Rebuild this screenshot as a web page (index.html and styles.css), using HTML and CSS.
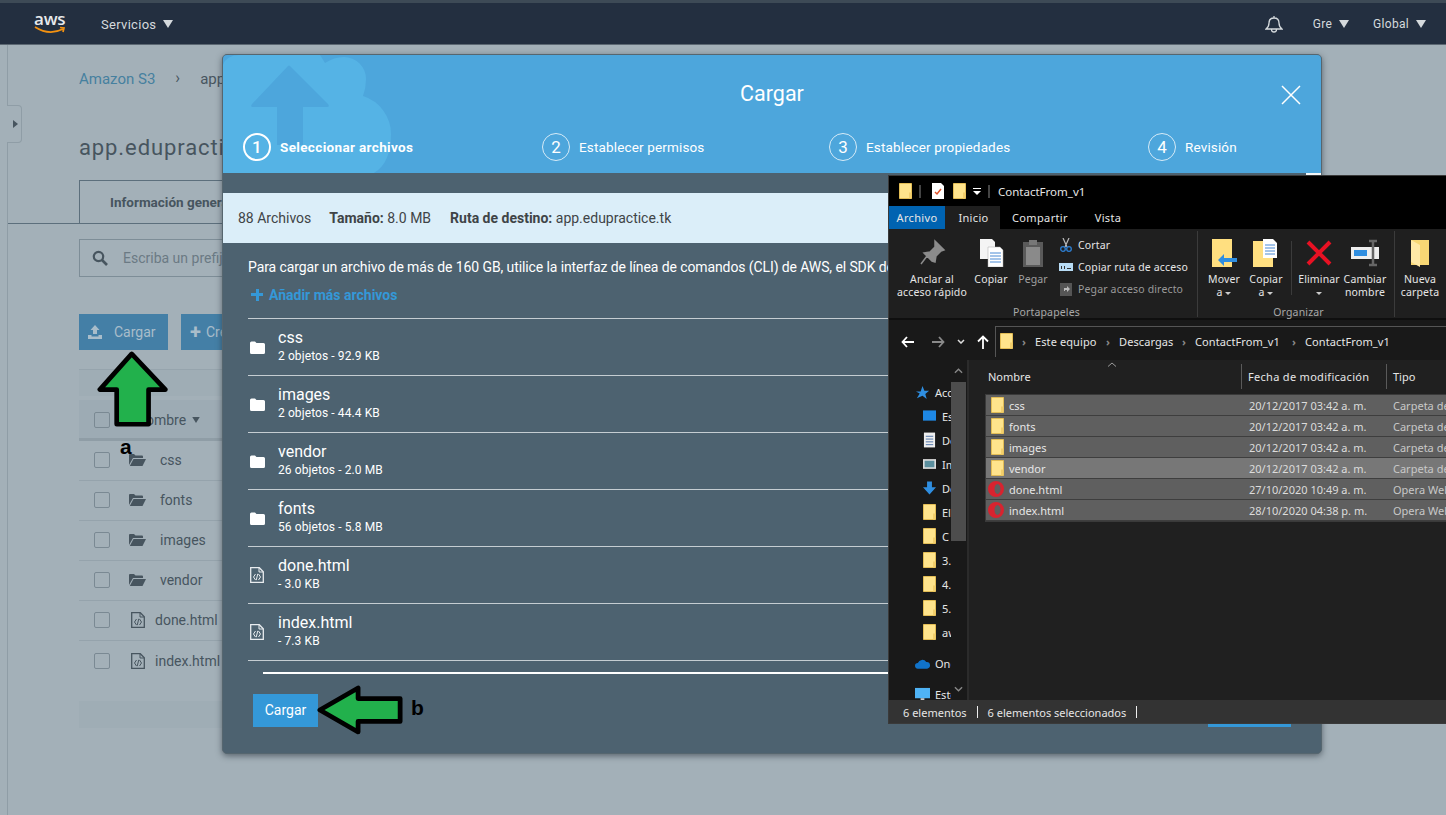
FILE: index.html
```html
<!DOCTYPE html>
<html lang="en">
<head>
  <meta charset="UTF-8" />
  <title>Cargar – Amazon S3</title>
  <link rel="stylesheet" href="styles.css">
</head>
<body>
  <svg class="defs" width="0" height="0">
    <symbol id="i-folder" viewBox="0 0 13 16">
      <path d="M.5.5h12v15H.5z" fill="#ffe48c" stroke="#e3bd55"/>
      <path d="M10 9.500h2.500v6H10z" fill="#f3cf6c"/>
    </symbol>
    <symbol id="i-caret" viewBox="0 0 10 8"><path d="M0 0h10L5 8z" fill="currentColor"/></symbol>
    <symbol id="i-openfolder" viewBox="0 0 17 14">
      <path d="M0 12V2q0-1 1-1h4l1.500 1.500H13q1 0 1 1V5H4L0 12z" fill="currentColor"/>
      <path d="M4.500 6H17l-3.500 7H.8z" fill="currentColor"/>
    </symbol>
    <symbol id="i-file" viewBox="0 0 14 16">
      <path d="M.7.700h8.600l4 4v10.600H.7z" fill="none" stroke="currentColor" stroke-width="1.300"/>
      <path d="M9 1v4h4M5.500 7 3.500 10l2 3M8.500 7l2 3-2 3M7.800 6.800 6.200 13.200" fill="none" stroke="currentColor"/>
    </symbol>
    <symbol id="i-whitefolder" viewBox="0 0 15 13">
      <path d="M0 2q0-1.500 1.500-1.500h3.500L6.500 2h7Q15 2 15 3.500v8q0 1.500-1.500 1.500h-12Q0 13 0 11.500z" fill="#fff"/>
    </symbol>
    <symbol id="i-opera" viewBox="0 0 16 16">
      <path fill-rule="evenodd" d="M8 0a8 8 0 1 0 0 16A8 8 0 0 0 8 0zm1.500 3c1.800 0 3 2.200 3 5s-1.200 5-3 5-3-2.200-3-5 1.200-5 3-5z" fill="#d8232f"/>
    </symbol>
  </svg>

  <header class="topnav">
    <div class="logo">
      <span class="logo-text">aws</span>
      <svg class="logo-smile" viewBox="0 0 33 8"><path d="M1 1q14 9 28 2M26 1.500l4 .5-1 4" fill="none" stroke="#f29111" stroke-width="1.700"/></svg>
    </div>
    <span class="nav-item nav-services">Servicios <svg class="nav-caret"><use href="#i-caret"/></svg></span>
    <svg class="bell" viewBox="0 0 18 18"><path d="M1 14q3-2 3-6 0-5 5-5t5 5q0 4 3 6zM9 1v2M6.500 14.500a2.500 2.500 0 0 0 5 0" fill="none" stroke="#d5dadd" stroke-width="1.300"/></svg>
    <span class="nav-item nav-user">Gre <svg class="nav-caret"><use href="#i-caret"/></svg></span>
    <span class="nav-item">Global <svg class="nav-caret"><use href="#i-caret"/></svg></span>
  </header>

  <div class="console">
    <div class="side-handle"><span class="side-arrow"></span></div>
    <main class="bucket">
      <nav class="crumbs"><a>Amazon S3</a><span class="crumb-sep">›</span><span>app.edupractice.tk</span></nav>
      <h1 class="bucket-title">app.edupractice.tk</h1>
      <div class="tabs"><div class="tab">Información general</div></div>
      <div class="search">
        <svg class="search-icon" viewBox="0 0 16 16"><circle cx="6.500" cy="6.500" r="4.700" fill="none" stroke="currentColor" stroke-width="2.200"/><path d="m10 10 5 5" stroke="currentColor" stroke-width="2.600"/></svg>
        <span>Escriba un prefijo</span>
      </div>
      <div class="actions">
        <button class="action action-upload">
          <svg class="action-icon" viewBox="0 0 16 14"><path d="M8 0l4.500 5H10v4H6V5H3.500zM1 10h3.500v1.500h7V10H15v4H1z" fill="currentColor"/></svg>
          Cargar
        </button>
        <button class="action action-new"><span class="plus">+</span> Crear carpeta</button>
      </div>
      <div class="table-band"></div>
      <div class="row row-head"><span class="check"></span><span class="col-name">Nombre <svg class="sort-caret"><use href="#i-caret"/></svg></span></div>
      <div class="row"><span class="check"></span><svg class="row-folder"><use href="#i-openfolder"/></svg><span class="row-name">css</span></div>
      <div class="row"><span class="check"></span><svg class="row-folder"><use href="#i-openfolder"/></svg><span class="row-name">fonts</span></div>
      <div class="row"><span class="check"></span><svg class="row-folder"><use href="#i-openfolder"/></svg><span class="row-name">images</span></div>
      <div class="row"><span class="check"></span><svg class="row-folder"><use href="#i-openfolder"/></svg><span class="row-name">vendor</span></div>
      <div class="row"><span class="check"></span><svg class="row-file"><use href="#i-file"/></svg><span class="row-name row-name-file">done.html</span></div>
      <div class="row row-last"><span class="check"></span><svg class="row-file"><use href="#i-file"/></svg><span class="row-name row-name-file">index.html</span></div>
      <div class="table-foot"></div>
    </main>
  </div>

  <section class="modal">
    <div class="modal-head">
      <svg class="modal-cloud" viewBox="0 0 170 119">
        <path d="M0 119V15Q2 1 18 1H98l5 8q9-6 19-6a22 22 0 0 1 22 22q0 9-3 17a40 40 0 0 1 28 38q0 44-39 44z" fill="#55b3e5"/>
        <path d="M66 12 30 50q-2 3 1 3h24v38h26V53h24q3 0 1-3L68 12q-1-1-2 0z" fill="#4da6dc"/>
      </svg>
      <h2 class="modal-title">Cargar</h2>
      <svg class="modal-close" viewBox="0 0 20 20"><path d="m1 1 18 18M19 1 1 19" stroke="#fff" stroke-width="1.500"/></svg>
      <ol class="steps">
        <li class="step step-on"><span class="step-num">1</span>Seleccionar archivos</li>
        <li class="step"><span class="step-num">2</span>Establecer permisos</li>
        <li class="step"><span class="step-num">3</span>Establecer propiedades</li>
        <li class="step"><span class="step-num">4</span>Revisión</li>
      </ol>
    </div>
    <div class="modal-body">
      <div class="head-strip"></div>
      <div class="summary">
        <span class="sum-count">88 Archivos</span>
        <span class="sum-size"><b>Tamaño:</b> 8.0 MB</span>
        <span><b>Ruta de destino:</b> app.edupractice.tk</span>
      </div>
      <p class="hint">Para cargar un archivo de más de 160 GB, utilice la interfaz de línea de comandos (CLI) de AWS, el SDK de AWS o la API REST de Amazon S3.</p>
      <div class="add-more"><span class="add-plus"></span>Añadir más archivos</div>
      <ul class="files">
        <li class="file"><svg class="file-folder"><use href="#i-whitefolder"/></svg><div class="file-text"><div class="file-name">css</div><div class="file-meta">2 objetos - 92.9 KB</div></div></li>
        <li class="file"><svg class="file-folder"><use href="#i-whitefolder"/></svg><div class="file-text"><div class="file-name">images</div><div class="file-meta">2 objetos - 44.4 KB</div></div></li>
        <li class="file"><svg class="file-folder"><use href="#i-whitefolder"/></svg><div class="file-text"><div class="file-name">vendor</div><div class="file-meta">26 objetos - 2.0 MB</div></div></li>
        <li class="file"><svg class="file-folder"><use href="#i-whitefolder"/></svg><div class="file-text"><div class="file-name">fonts</div><div class="file-meta">56 objetos - 5.8 MB</div></div></li>
        <li class="file"><svg class="file-doc"><use href="#i-file"/></svg><div class="file-text"><div class="file-name">done.html</div><div class="file-meta">- 3.0 KB</div></div></li>
        <li class="file"><svg class="file-doc"><use href="#i-file"/></svg><div class="file-text"><div class="file-name">index.html</div><div class="file-meta">- 7.3 KB</div></div></li>
      </ul>
      <div class="progress-line"></div>
      <div class="modal-foot">
        <button class="btn-upload">Cargar</button>
        <span class="btn-next"></span>
      </div>
    </div>
  </section>

  <section class="explorer">
    <div class="ex-title">
      <svg class="ex-folder"><use href="#i-folder"/></svg>
      <span class="ex-bar"></span>
      <svg class="ex-doc" viewBox="0 0 12 16"><path d="M0 0h9l3 3v13H0z" fill="#fff"/><path d="m3 9 2 2 4-5" fill="none" stroke="#e0532a" stroke-width="1.500"/></svg>
      <svg class="ex-folder"><use href="#i-folder"/></svg>
      <svg class="ex-drop" viewBox="0 0 8 7"><path d="M0 0h8v1H0zM0 3h8L4 7z" fill="#fff"/></svg>
      <span class="ex-bar"></span>
      <span class="ex-name">ContactFrom_v1</span>
    </div>
    <div class="ex-tabs">
      <span class="ex-tab ex-tab-file">Archivo</span>
      <span class="ex-tab ex-tab-on">Inicio</span>
      <span class="ex-tab ex-tab-share">Compartir</span>
      <span class="ex-tab">Vista</span>
    </div>
    <div class="ribbon">
      <div class="rgroup rgroup-clip">
        <div class="rtools">
          <div class="rbig rbig-pin">
            <svg class="ricon" viewBox="0 0 28 28"><path d="M17 2l9 9-3 1-5 5-1 6-3-1-8-8 6-1 5-5z M9 17l-6 8" fill="#8b8b8b" stroke="#8b8b8b" stroke-width="1.500"/></svg>
            <span>Anclar al<br>acceso rápido</span>
          </div>
          <div class="rbig">
            <svg class="ricon" viewBox="0 0 28 28"><path d="M3 0h12l3 3v17H3z" fill="#f4f4f4"/><path d="M11 8h12l3 3v17H11z" fill="#fff" stroke="#aaa" stroke-width=".5"/><path d="M13 14h11M13 17h11M13 20h11M13 23h11" stroke="#4a8ad4"/></svg>
            <span>Copiar</span>
          </div>
          <div class="rbig rbig-off">
            <svg class="ricon" viewBox="0 0 28 28"><path d="M4 3h20v25H4z" fill="#5a5a5a"/><path d="M7 8h14v18H7z" fill="#8a8a8a"/><path d="M10 1h8v5h-8z" fill="#777"/></svg>
            <span>Pegar</span>
          </div>
          <div class="rsmalls">
            <div class="rsmall"><svg class="rsicon" viewBox="0 0 14 14"><path d="M4 0l4 9M10 0 6 9" stroke="#bbb" stroke-width="1.200"/><circle cx="4" cy="11" r="2.300" fill="none" stroke="#2d7fd3" stroke-width="1.300"/><circle cx="10" cy="11" r="2.300" fill="none" stroke="#2d7fd3" stroke-width="1.300"/></svg>Cortar</div>
            <div class="rsmall"><svg class="rsicon" viewBox="0 0 14 14"><path d="M0 3h14v8H0z" fill="#b8dcf5"/><path d="M2 6h1v3H2zM5 6h1v3H5zM8 8h4v1H8z" fill="#333"/></svg>Copiar ruta de acceso</div>
            <div class="rsmall rsmall-off"><svg class="rsicon" viewBox="0 0 14 14"><path d="M1 1h12v13H1z" fill="#555"/><path d="M5 9V6h3V4l3 3-3 3V8H6v1z" fill="#bbb"/></svg>Pegar acceso directo</div>
          </div>
        </div>
        <div class="rlabel">Portapapeles</div>
      </div>
      <div class="rgroup rgroup-org">
        <div class="rtools">
          <div class="rbig rbig-org">
            <svg class="ricon" viewBox="0 0 28 28"><path d="M2 0h20v28H2z" fill="#ffdf80"/><path d="M14 15 8 21l6 6v-4h13v-4H14z" fill="#2f8ee0"/></svg>
            <span>Mover<br>a <i class="rcaret"></i></span>
          </div>
          <div class="rbig rbig-org">
            <svg class="ricon" viewBox="0 0 28 28"><path d="M1 2h20v26H1z" fill="#ffdf80"/><path d="M11 0h10l4 4v15H11z" fill="#fff"/><path d="M13 6h10M13 9h10M13 12h10M13 15h10" stroke="#4a8ad4"/></svg>
            <span>Copiar<br>a <i class="rcaret"></i></span>
          </div>
          <span class="rsep"></span>
          <div class="rbig rbig-wide">
            <svg class="ricon" viewBox="0 0 28 28"><path d="M3 3l22 22M25 3 3 25" stroke="#e81123" stroke-width="4"/></svg>
            <span>Eliminar<br><i class="rcaret"></i></span>
          </div>
          <div class="rbig rbig-wide">
            <svg class="ricon" viewBox="0 0 28 28"><path d="M0 8h28v12H0z" fill="#eee"/><path d="M3 11h13v6H3z" fill="#2f8ee0"/><path d="M22 2v24M18 2h8M18 26h8" stroke="#666" stroke-width="2.500"/></svg>
            <span>Cambiar<br>nombre</span>
          </div>
        </div>
        <div class="rlabel">Organizar</div>
      </div>
      <div class="rgroup rgroup-new">
        <div class="rtools">
          <div class="rbig rbig-org">
            <svg class="ricon" viewBox="0 0 28 28"><path d="M5 1h18v25H5z" fill="#f7d774"/><path d="M5 1l9 5v22L5 23z" fill="#ffe9a6"/></svg>
            <span>Nueva<br>carpeta</span>
          </div>
        </div>
      </div>
    </div>
    <div class="ex-nav">
      <svg class="ex-arrow" viewBox="0 0 14 12"><path d="M13 6H2M6 1 1.500 6 6 11" fill="none" stroke="#fff" stroke-width="1.800"/></svg>
      <svg class="ex-arrow ex-arrow-off" viewBox="0 0 14 12"><path d="M1 6h11M8 1l4.500 5L8 11" fill="none" stroke="#8a8a8a" stroke-width="1.800"/></svg>
      <svg class="ex-chev" viewBox="0 0 8 5"><path d="M1 1l3 3 3-3" fill="none" stroke="#ddd" stroke-width="1.500"/></svg>
      <svg class="ex-up" viewBox="0 0 12 14"><path d="M6 14V2M1 6.500 6 1.500l5 5" fill="none" stroke="#fff" stroke-width="1.800"/></svg>
      <div class="ex-path">
        <svg class="ex-folder"><use href="#i-folder"/></svg>
        <span class="path-part path-first">Este equipo</span>
        <span class="path-part path-second">Descargas</span>
        <span class="path-part path-third">ContactFrom_v1</span>
        <span class="path-part">ContactFrom_v1</span>
      </div>
    </div>
    <div class="ex-main">
      <aside class="ex-side">
        <div class="side-list">
          <div class="si si-top"><svg class="si-icon-b" viewBox="0 0 16 16"><path d="M8 1l2 5h5l-4 3.500L12.500 15 8 11.500 2 14l3-5-4-2h5z" fill="#2f8ee0"/></svg><span>Acceso rápido</span></div>
          <div class="si"><svg class="si-icon" viewBox="0 0 14 14"><path d="M0 1h14v11H0z" fill="#1e88e5"/></svg><span>Escritorio</span></div>
          <div class="si"><svg class="si-icon" viewBox="0 0 14 16"><path d="M1 0h12v16H1z" fill="#eee"/><path d="M3 4h8M3 7h8M3 10h8M3 13h8" stroke="#4a6fa5"/></svg><span>Documentos</span></div>
          <div class="si"><svg class="si-icon" viewBox="0 0 16 14"><path d="M0 1h16v12H0z" fill="#ddd"/><path d="M2 3h12v8H2z" fill="#5b8f9e"/></svg><span>Imágenes</span></div>
          <div class="si"><svg class="si-icon" viewBox="0 0 16 16"><path d="M5 0h6v7h5l-8 9-8-9h5z" fill="#2f8ee0"/></svg><span>Descargas</span></div>
          <div class="si"><svg class="si-icon"><use href="#i-folder"/></svg><span>El</span></div>
          <div class="si"><svg class="si-icon"><use href="#i-folder"/></svg><span>C</span></div>
          <div class="si"><svg class="si-icon"><use href="#i-folder"/></svg><span>3.</span></div>
          <div class="si"><svg class="si-icon"><use href="#i-folder"/></svg><span>4.</span></div>
          <div class="si"><svg class="si-icon"><use href="#i-folder"/></svg><span>5.</span></div>
          <div class="si si-gap"><svg class="si-icon"><use href="#i-folder"/></svg><span>aws</span></div>
          <div class="si si-top si-gap"><svg class="si-icon-b" viewBox="0 0 16 11"><path d="M3 11a3 3 0 0 1 0-6 5 5 0 0 1 9-1 3.500 3.500 0 0 1 1 7z" fill="#1173c9"/></svg><span>OneDrive</span></div>
          <div class="si si-top"><svg class="si-icon-b" viewBox="0 0 16 14"><path d="M0 0h16v11H0z" fill="#4fb3f5"/><path d="M6 11h4v2h2v1H4v-1h2z" fill="#ccc"/></svg><span>Este equipo</span></div>
        </div>
        <div class="side-scroll">
          <svg class="scroll-btn" viewBox="0 0 10 6"><path d="M1 5l4-4 4 4" fill="none" stroke="#888" stroke-width="1.500"/></svg>
          <div class="scroll-thumb"></div>
          <svg class="scroll-btn" viewBox="0 0 10 6"><path d="M1 1l4 4 4-4" fill="none" stroke="#888" stroke-width="1.500"/></svg>
        </div>
      </aside>
      <div class="ex-list">
        <div class="ex-head">
          <span class="h-name">Nombre</span>
          <span class="h-date">Fecha de modificación</span>
          <span class="h-type">Tipo</span>
          <svg class="h-sort" viewBox="0 0 10 5"><path d="M1 4.500 5 1l4 3.500" fill="none" stroke="#999"/></svg>
        </div>
        <div class="ex-rows">
          <div class="ex-row"><svg class="ex-ficon"><use href="#i-folder"/></svg><span class="c-name">css</span><span class="c-date">20/12/2017 03:42 a. m.</span><span class="c-type">Carpeta de archivos</span></div>
          <div class="ex-row"><svg class="ex-ficon"><use href="#i-folder"/></svg><span class="c-name">fonts</span><span class="c-date">20/12/2017 03:42 a. m.</span><span class="c-type">Carpeta de archivos</span></div>
          <div class="ex-row"><svg class="ex-ficon"><use href="#i-folder"/></svg><span class="c-name">images</span><span class="c-date">20/12/2017 03:42 a. m.</span><span class="c-type">Carpeta de archivos</span></div>
          <div class="ex-row ex-row-hover"><svg class="ex-ficon"><use href="#i-folder"/></svg><span class="c-name">vendor</span><span class="c-date">20/12/2017 03:42 a. m.</span><span class="c-type">Carpeta de archivos</span></div>
          <div class="ex-row"><svg class="ex-ficon ex-ficon-op"><use href="#i-opera"/></svg><span class="c-name">done.html</span><span class="c-date">27/10/2020 10:49 a. m.</span><span class="c-type">Opera Web Document</span></div>
          <div class="ex-row"><svg class="ex-ficon ex-ficon-op"><use href="#i-opera"/></svg><span class="c-name">index.html</span><span class="c-date">28/10/2020 04:38 p. m.</span><span class="c-type">Opera Web Document</span></div>
        </div>
      </div>
    </div>
    <div class="ex-status">
      <span>6 elementos</span><span class="st-bar"></span><span>6 elementos seleccionados</span><span class="st-bar"></span>
    </div>
  </section>

  <svg class="arrow arrow-a" viewBox="0 0 80 84"><path d="M37 3 3 41h18v37h34V41h18z" fill="#22b14c" stroke="#000" stroke-width="5" stroke-linejoin="round"/></svg>
  <span class="note note-a">a</span>
  <svg class="arrow arrow-b" viewBox="0 0 90 52"><path d="M3 26 43 3v11h44v24H43v11z" fill="#22b14c" stroke="#000" stroke-width="5" stroke-linejoin="round"/></svg>
  <span class="note note-b">b</span>
</body>
</html>
```
FILE: styles.css
```css
* {
  box-sizing: border-box;
}
html, body {
  height: 100%;
}
body {
  margin: 0;
  overflow: hidden;
  background: #a3b0b8;
  color: #47555f;
  font-family: Roboto, sans-serif;
  font-size: 14px;
}
button {
  font-family: inherit;
  border: none;
}
ul, ol {
  list-style: none;
  margin: 0;
  padding: 0;
}
.defs {
  display: block;
  height: 0;
}

/* top bar */
.topnav {
  display: flex;
  align-items: center;
  height: 45px;
  padding: 1px 20px 0 34px;
  background: #232f40;
  border-top: 3px solid #3d4a56;
  border-bottom: 1px solid #5c6873;
  color: #d5dadd;
  font-size: 12px;
}
.logo {
  position: relative;
  width: 32px;
  height: 24px;
  margin-top: -4px;
}
.logo-text {
  display: block;
  color: #e8eaec;
  font: 600 17px/17px "Open Sans", sans-serif;
  letter-spacing: -.2px;
}
.logo-smile {
  position: absolute;
  left: 0;
  top: 16px;
  width: 33px;
  height: 8px;
}
.nav-item {
  display: flex;
  align-items: center;
  gap: 7px;
  letter-spacing: .3px;
}
.nav-services {
  margin-left: 35px;
  margin-right: auto;
  font-size: 13px;
}
.nav-caret {
  width: 10px;
  height: 8px;
}
.bell {
  width: 18px;
  height: 18px;
  margin-right: 30px;
}
.nav-user {
  margin-right: 24px;
}

/* page behind the dialog */
.console {
  position: relative;
  height: 770px;
  margin-left: 7px;
  padding-left: 71px;
  border-left: 1px solid #8f9da6;
}
.side-handle {
  position: absolute;
  left: -1px;
  top: 60px;
  display: flex;
  align-items: center;
  width: 15px;
  height: 38px;
  padding-left: 6px;
  background: #a3b0b8;
  border: 1px solid #8f9da6;
  border-left: none;
  border-radius: 0 4px 4px 0;
}
.side-arrow {
  border-left: 5px solid #47555f;
  border-top: 4px solid transparent;
  border-bottom: 4px solid transparent;
}
.bucket {
  width: 400px;
}
.crumbs {
  display: flex;
  gap: 20px;
  padding-top: 25px;
  height: 63px;
  font-size: 15px;
  white-space: nowrap;
}
.crumbs a {
  color: #46809f;
}
.crumb-sep {
  font-size: 16px;
  line-height: 16px;
}
.bucket-title {
  margin: 27px 0 0;
  height: 45px;
  color: #47555f;
  font-size: 22px;
  font-weight: 400;
  letter-spacing: .9px;
  white-space: nowrap;
}
.tabs {
  position: relative;
  height: 44px;
  border-bottom: 1px solid #5c6f7c;
}
.tabs::before {
  content: "";
  position: absolute;
  left: -71px;
  bottom: -1px;
  width: 71px;
  border-bottom: 1px solid #5c6f7c;
}
.tab {
  width: 200px;
  height: 44px;
  padding: 13px 0 0 30px;
  border: 1px solid #5c6f7c;
  border-bottom: none;
  font-weight: 700;
  font-size: 13.500px;
  white-space: nowrap;
}
.search {
  display: flex;
  align-items: center;
  gap: 15px;
  height: 38px;
  margin-top: 15px;
  padding-left: 12px;
  border: 1px solid #7d8d97;
  color: #6b7a84;
  white-space: nowrap;
}
.search-icon {
  width: 16px;
  height: 16px;
  color: #47555f;
}
.actions {
  display: flex;
  gap: 13px;
  margin-top: 37px;
}
.action {
  display: flex;
  align-items: center;
  height: 36px;
  background: #447fa6;
  color: #a9bdca;
  font-size: 14px;
  white-space: nowrap;
}
.action-upload {
  width: 89px;
  padding-left: 8px;
  gap: 11px;
}
.action-new {
  width: 150px;
  padding-left: 9px;
  gap: 5px;
}
.action-icon {
  width: 16px;
  height: 14px;
}
.plus {
  font-size: 20px;
  font-weight: 700;
}
.table-band {
  height: 27px;
  margin-top: 19px;
  background: #9fadb5;
  border-top: 1px solid #96a4ad;
}
.row {
  display: flex;
  align-items: center;
  height: 40px;
  padding: 0 0 1px 15px;
  border-bottom: 1px solid #95a3ac;
  white-space: nowrap;
}
.row-head {
  height: 41px;
  margin-top: 4px;
  padding-top: 2px;
  padding-bottom: 0;
  background: #9dabb4;
  border-bottom: 3px solid #8f9da6;
}
.row-last {
  border-bottom: none;
}
.check {
  flex: none;
  width: 16px;
  height: 16px;
  border: 1px solid #7a8993;
  border-radius: 2px;
}
.col-name {
  margin-left: 26px;
  display: flex;
  align-items: center;
  gap: 5px;
}
.sort-caret {
  width: 10px;
  height: 6px;
}
.row-folder {
  width: 17px;
  height: 14px;
  margin-left: 19px;
}
.row-file {
  width: 14px;
  height: 16px;
  margin-left: 21px;
}
.row-name {
  margin-left: 14px;
}
.row-name-file {
  margin-left: 10px;
}
.table-foot {
  height: 27px;
  margin-top: 20px;
  background: #9fadb5;
}

/* dialog */
.modal {
  position: absolute;
  left: 222px;
  top: 54px;
  width: 1100px;
  height: 700px;
  overflow: hidden;
  background: #4d6270;
  border: 1px solid #56666f;
  border-radius: 5px;
  box-shadow: 0 2px 6px rgba(40, 50, 60, .6);
  color: #fff;
}
.modal-head {
  position: relative;
  height: 118px;
  background: #4da6dc;
}
.modal-cloud {
  position: absolute;
  left: -1px;
  top: -1px;
  width: 170px;
  height: 119px;
}
.modal-title {
  position: relative;
  margin: 0;
  padding-top: 26px;
  height: 78px;
  text-align: center;
  font-size: 21.500px;
  font-weight: 400;
}
.modal-close {
  position: absolute;
  right: 20px;
  top: 30px;
  width: 20px;
  height: 20px;
}
.steps {
  position: relative;
  display: grid;
  grid-template-columns: 299px 287px 319px auto;
  padding-left: 20px;
}
.step {
  display: flex;
  align-items: center;
  gap: 9px;
  font-size: 13.500px;
  letter-spacing: .15px;
  white-space: nowrap;
}
.step-on {
  font-weight: 700;
  letter-spacing: .35px;
}
.step-num {
  display: flex;
  align-items: center;
  justify-content: center;
  width: 28px;
  height: 28px;
  border: 1px solid #d6ebf7;
  border-radius: 50%;
  font-size: 17px;
  font-weight: 400;
}
.step-on .step-num {
  border: 2px solid #fff;
  font-weight: 500;
}
.head-strip {
  width: 15px;
  height: 2px;
  margin-left: auto;
  background: #f4f6f7;
}
.summary {
  display: flex;
  align-items: center;
  height: 50px;
  margin-top: 18px;
  padding-left: 15px;
  background: #dbeef9;
  color: #3f4447;
  font-size: 14px;
  white-space: nowrap;
}
.sum-count {
  margin-right: 18px;
}
.sum-size {
  margin-right: 19px;
}
.hint {
  margin: 16px 0 0 25px;
  height: 17px;
  line-height: 17px;
  font-size: 14px;
  letter-spacing: -.1px;
  white-space: nowrap;
}
.add-more {
  display: flex;
  align-items: center;
  gap: 6px;
  margin: 10px 0 0 28px;
  height: 17px;
  color: #3498d8;
  font-weight: 700;
}
.add-plus {
  position: relative;
  width: 12px;
  height: 12px;
  background: linear-gradient(#3498d8, #3498d8) center / 100% 3px no-repeat, linear-gradient(#3498d8, #3498d8) center / 3px 100% no-repeat;
}
.files {
  margin: 15px 25px 0;
  border-top: 1px solid #c5cdd2;
}
.file {
  display: flex;
  align-items: center;
  gap: 14px;
  height: 57px;
  padding-left: 2px;
  border-bottom: 1px solid #c5cdd2;
}
.file-text {
  margin-top: -2px;
}
.file-folder {
  width: 15px;
  height: 13px;
  margin-right: -1px;
}
.file-doc {
  width: 14px;
  height: 16px;
  color: #e8ecef;
}
.file-name {
  font-size: 16px;
  line-height: 20px;
}
.file-meta {
  font-size: 12px;
  line-height: 16px;
  letter-spacing: .1px;
}
.progress-line {
  height: 2px;
  margin: 11px 25px 0 40px;
  background: #fff;
}
.modal-foot {
  display: flex;
  justify-content: space-between;
  margin: 20px 30px 0;
}
.btn-upload {
  width: 65px;
  height: 33px;
  padding-bottom: 3px;
  background: #3498d8;
  color: #fff;
  font-size: 14px;
}
.btn-next {
  width: 83px;
  height: 33px;
  background: #3498d8;
}

/* file explorer window */
.explorer {
  position: absolute;
  left: 888px;
  top: 175px;
  display: flex;
  flex-direction: column;
  width: 558px;
  height: 549px;
  overflow: hidden;
  background: #202020;
  border: 1px solid #3a3a3a;
  border-right: none;
  color: #e6e6e6;
  font: 11px "Noto Sans", sans-serif;
}
.ex-title {
  display: flex;
  align-items: center;
  height: 30px;
  padding-left: 10px;
  background: #000;
}
.ex-folder {
  flex: none;
  width: 13px;
  height: 16px;
}
.ex-bar {
  width: 2px;
  height: 13px;
  margin: 0 7px;
  background: #444;
}
.ex-doc {
  width: 12px;
  height: 16px;
  margin: 0 9px 0 4px;
}
.ex-drop {
  width: 8px;
  height: 7px;
  margin-left: 7px;
}
.ex-name {
  margin-left: 1px;
  font-size: 11.500px;
}
.ex-tabs {
  display: flex;
  height: 23px;
  background: #000;
  letter-spacing: .35px;
}
.ex-tab {
  display: flex;
  align-items: center;
  justify-content: center;
  width: 56px;
}
.ex-tab-file {
  background: #0063b1;
}
.ex-tab-on {
  background: #1f1f1f;
  width: 55px;
  padding-left: 2px;
}
.ex-tab-share {
  width: 80px;
}
.ribbon {
  display: flex;
  flex: none;
  height: 91px;
  background: #1f1f1f;
  border-bottom: 2px solid #0f0f0f;
  letter-spacing: .15px;
}
.rgroup {
  display: flex;
  flex-direction: column;
  border-right: 1px solid #3b3b3b;
  margin: 2px 0 1px;
}
.rgroup-clip {
  width: 309px;
  padding-left: 7px;
}
.rgroup-org {
  width: 197px;
  padding-left: 5px;
}
.rgroup-new {
  padding-left: 4px;
  border: none;
}
.rtools {
  display: flex;
  flex: none;
  height: 74px;
  padding-top: 8px;
}
.rbig {
  display: flex;
  flex-direction: column;
  align-items: center;
  flex: none;
  width: 42px;
  text-align: center;
  line-height: 13px;
  white-space: nowrap;
  font-size: 10.500px;
}
.rbig-pin {
  width: 72px;
  margin-right: 2px;
}
.rbig-off {
  color: #a0a0a0;
}
.rbig-org {
  width: 42px;
}
.rbig-wide {
  width: 46px;
}
.ricon {
  flex: none;
  width: 28px;
  height: 28px;
  margin-bottom: 6px;
}
.rcaret {
  display: inline-block;
  vertical-align: middle;
  border-top: 3px solid #ccc;
  border-left: 3px solid transparent;
  border-right: 3px solid transparent;
}
.rsep {
  flex: none;
  width: 1px;
  height: 54px;
  margin: 2px 4px 0 4px;
  background: #3b3b3b;
}
.rsmalls {
  display: flex;
  flex-direction: column;
  gap: 6px;
  margin: -2px 0 0 5px;
}
.rsmall {
  display: flex;
  align-items: center;
  gap: 5px;
  height: 16px;
  font-size: 10.500px;
  white-space: nowrap;
}
.rsmall-off {
  color: #9a9a9a;
}
.rsicon {
  width: 14px;
  height: 14px;
}
.rlabel {
  text-align: center;
  color: #a8a8a8;
  font-size: 10.500px;
  line-height: 14px;
}
.ex-nav {
  display: flex;
  flex: none;
  align-items: center;
  height: 40px;
  padding: 6px 0 3px 12px;
  background: #191919;
}
.ex-arrow {
  width: 14px;
  height: 12px;
  margin-right: 16px;
}
.ex-arrow-off {
  margin-right: 12px;
}
.ex-chev {
  width: 8px;
  height: 5px;
  margin-right: 12px;
}
.ex-up {
  width: 12px;
  height: 14px;
  margin-right: 6px;
}
.ex-path {
  display: flex;
  flex: 1;
  align-items: center;
  height: 31px;
  padding: 0 0 2px 4px;
  border-left: 1px solid #555;
  border-top: 1px solid #555;
  letter-spacing: .1px;
  white-space: nowrap;
}
.path-part {
  display: flex;
  flex: none;
}
.path-part::before {
  content: "›";
  flex: none;
  width: 13px;
  color: #8a8a8a;
  font-weight: 700;
}
.path-first {
  width: 84px;
  margin-left: 9px;
}
.path-second {
  width: 76px;
}
.path-third {
  width: 110px;
}
.ex-main {
  display: flex;
  flex: 1;
  min-height: 0;
}
.ex-side {
  display: flex;
  flex: none;
  width: 80px;
  background: #191919;
  border-right: 2px solid #2b2b2b;
}
.side-list {
  width: 62px;
  overflow: hidden;
  padding-top: 20px;
}
.si {
  display: flex;
  align-items: center;
  gap: 6px;
  height: 24px;
  padding-left: 34px;
  white-space: nowrap;
}
.si-top {
  padding-left: 26px;
  gap: 5px;
}
.si-gap {
  margin-bottom: 7px;
}
.si-icon {
  flex: none;
  width: 13px;
  height: 16px;
}
.si-icon-b {
  flex: none;
  width: 15px;
  height: 15px;
}
.side-scroll {
  display: flex;
  flex-direction: column;
  align-items: center;
  width: 15px;
}
.scroll-btn {
  flex: none;
  width: 9px;
  height: 6px;
  margin: 8px 0;
}
.scroll-thumb {
  width: 15px;
  height: 162px;
  background: #4d4d4d;
}
.scroll-thumb + .scroll-btn {
  margin-top: 145px;
}
.ex-list {
  flex: 1;
  min-width: 0;
  padding-left: 16px;
}
.ex-head {
  position: relative;
  display: flex;
  height: 34px;
  margin-left: 0;
  align-items: center;
  padding-bottom: 2px;
}
.h-name, .h-date, .h-type {
  flex: none;
  height: 25px;
  line-height: 25px;
  padding-left: 3px;
}
.h-name {
  width: 257px;
  border-right: 1px solid #5a5a5a;
}
.h-date {
  width: 145px;
  padding-left: 6px;
  border-right: 1px solid #5a5a5a;
  letter-spacing: .3px;
}
.h-type {
  padding-left: 6px;
}
.h-sort {
  position: absolute;
  left: 122px;
  top: 2px;
  width: 10px;
  height: 5px;
}
.ex-rows {
  margin-top: 0;
  border: 1px solid #3a3a3a;
  border-right: none;
}
.ex-row {
  display: flex;
  align-items: center;
  height: 21px;
  background: #5f5f5f;
  border-bottom: 1px solid #3e3e3e;
  white-space: nowrap;
}
.ex-row-hover {
  background: #777;
}
.ex-ficon {
  flex: none;
  width: 13px;
  height: 16px;
  margin-left: 5px;
}
.ex-ficon-op {
  width: 16px;
  height: 16px;
  margin-left: 2px;
}
.c-name {
  flex: none;
  width: 240px;
  margin-left: 5px;
}
.c-date {
  flex: none;
  width: 144px;
  color: #dcdcdc;
}
.c-type {
  color: #c8c8c8;
}
.ex-status {
  display: flex;
  flex: none;
  align-items: center;
  gap: 10px;
  height: 23px;
  padding: 1px 0 0 14px;
  background: #333;
}
.st-bar {
  width: 1px;
  height: 12px;
  background: #eee;
}

/* annotations drawn over the screenshot */
.arrow {
  position: absolute;
}
.arrow-a {
  left: 97px;
  top: 351px;
  width: 75px;
  height: 79px;
}
.arrow-b {
  left: 317px;
  top: 685px;
  width: 86px;
  height: 50px;
}
.note {
  position: absolute;
  color: #000;
  font: 700 21px/21px "Liberation Sans", sans-serif;
}
.note-a {
  left: 120px;
  top: 436px;
}
.note-b {
  left: 411px;
  top: 697px;
}
```
